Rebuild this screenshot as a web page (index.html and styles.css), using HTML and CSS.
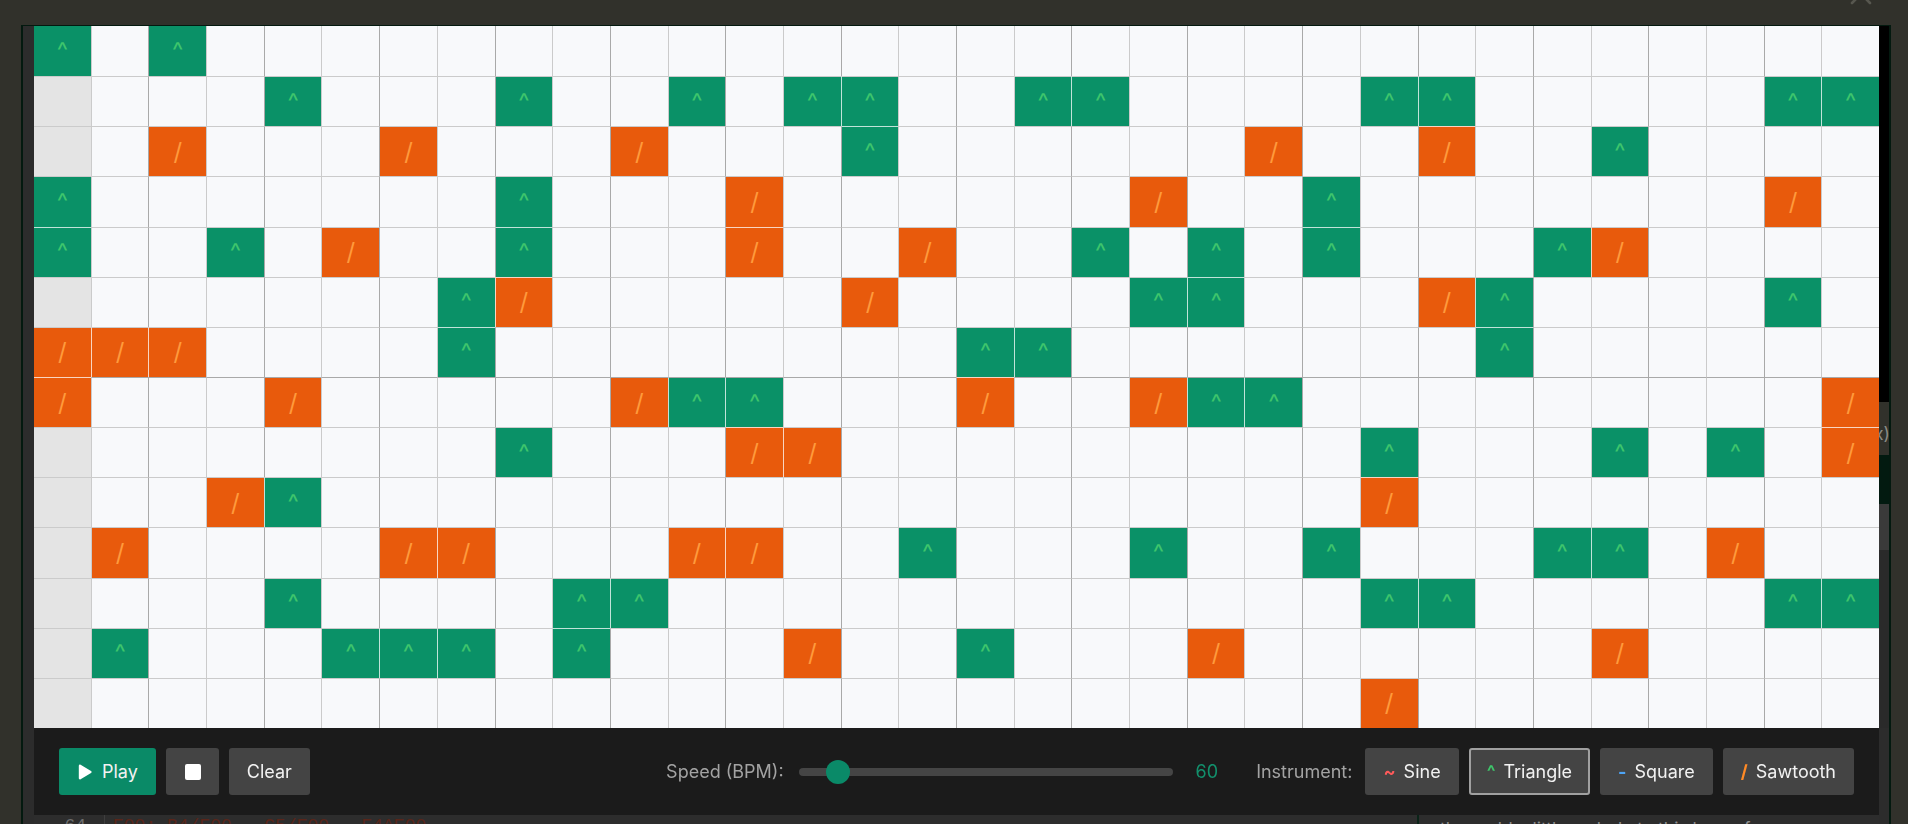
FILE: index.html
```html
<!DOCTYPE html>
<html lang="en">
<head>
<meta charset="utf-8">
<title>Step Sequencer</title>
<link rel="stylesheet" href="styles.css">
</head>
<body>
<div class="page">
  <header class="topbar">
    <button class="close" aria-label="Close">
      <svg width="22" height="22" viewBox="0 0 22 22"><path d="M2 2 L20 20 M20 2 L2 20" stroke="#57574f" stroke-width="2.6" stroke-linecap="round"/></svg>
    </button>
  </header>
  <div class="work">
    <div class="stage">
      <div class="stage-view"></div>
      <div class="editor">
        <div class="ln">64</div>
        <div class="code">E00: B4/E00 . C5/E00 . E4^E00</div>
        <div class="notes">then add a little melody to this loop of</div>
      </div>
    </div>
    <aside class="side">
      <div class="side-gap"></div>
      <div class="side-label"><span>(max)</span></div>
      <div class="side-green"></div>
      <div class="side-gray"></div>
      <div class="side-rest"></div>
    </aside>
  </div>
</div>

<div class="modal">
  <div class="m-left"></div>
  <div class="m-center">
    <div class="grid">
      <div class="row"><i class="t">^</i><i></i><i class="t">^</i><i></i><i></i><i></i><i></i><i></i><i></i><i></i><i></i><i></i><i></i><i></i><i></i><i></i><i></i><i></i><i></i><i></i><i></i><i></i><i></i><i></i><i></i><i></i><i></i><i></i><i></i><i></i><i></i><i></i></div>
      <div class="row"><i></i><i></i><i></i><i></i><i class="t">^</i><i></i><i></i><i></i><i class="t">^</i><i></i><i></i><i class="t">^</i><i></i><i class="t">^</i><i class="t">^</i><i></i><i></i><i class="t">^</i><i class="t">^</i><i></i><i></i><i></i><i></i><i class="t">^</i><i class="t">^</i><i></i><i></i><i></i><i></i><i></i><i class="t">^</i><i class="t">^</i></div>
      <div class="row"><i></i><i></i><i class="s">/</i><i></i><i></i><i></i><i class="s">/</i><i></i><i></i><i></i><i class="s">/</i><i></i><i></i><i></i><i class="t u">^</i><i></i><i></i><i></i><i></i><i></i><i></i><i class="s">/</i><i></i><i></i><i class="s u">/</i><i></i><i></i><i class="t">^</i><i></i><i></i><i></i><i></i></div>
      <div class="row"><i class="t">^</i><i></i><i></i><i></i><i></i><i></i><i></i><i></i><i class="t">^</i><i></i><i></i><i></i><i class="s">/</i><i></i><i></i><i></i><i></i><i></i><i></i><i class="s">/</i><i></i><i></i><i class="t">^</i><i></i><i></i><i></i><i></i><i></i><i></i><i></i><i class="s">/</i><i></i></div>
      <div class="row"><i class="t u">^</i><i></i><i></i><i class="t">^</i><i></i><i class="s">/</i><i></i><i></i><i class="t u">^</i><i></i><i></i><i></i><i class="s u">/</i><i></i><i></i><i class="s">/</i><i></i><i></i><i class="t">^</i><i></i><i class="t">^</i><i></i><i class="t u">^</i><i></i><i></i><i></i><i class="t">^</i><i class="s">/</i><i></i><i></i><i></i><i></i></div>
      <div class="row"><i></i><i></i><i></i><i></i><i></i><i></i><i></i><i class="t">^</i><i class="s u">/</i><i></i><i></i><i></i><i></i><i></i><i class="s">/</i><i></i><i></i><i></i><i></i><i class="t">^</i><i class="t u">^</i><i></i><i></i><i></i><i class="s">/</i><i class="t">^</i><i></i><i></i><i></i><i></i><i class="t">^</i><i></i></div>
      <div class="row"><i class="s">/</i><i class="s">/</i><i class="s">/</i><i></i><i></i><i></i><i></i><i class="t u">^</i><i></i><i></i><i></i><i></i><i></i><i></i><i></i><i></i><i class="t">^</i><i class="t">^</i><i></i><i></i><i></i><i></i><i></i><i></i><i></i><i class="t u">^</i><i></i><i></i><i></i><i></i><i></i><i></i></div>
      <div class="row mid"><i class="s u">/</i><i></i><i></i><i></i><i class="s">/</i><i></i><i></i><i></i><i></i><i></i><i class="s">/</i><i class="t">^</i><i class="t">^</i><i></i><i></i><i></i><i class="s u">/</i><i></i><i></i><i class="s">/</i><i class="t">^</i><i class="t">^</i><i></i><i></i><i></i><i></i><i></i><i></i><i></i><i></i><i></i><i class="s">/</i></div>
      <div class="row"><i></i><i></i><i></i><i></i><i></i><i></i><i></i><i></i><i class="t">^</i><i></i><i></i><i></i><i class="s u">/</i><i class="s">/</i><i></i><i></i><i></i><i></i><i></i><i></i><i></i><i></i><i></i><i class="t">^</i><i></i><i></i><i></i><i class="t">^</i><i></i><i class="t">^</i><i></i><i class="s u">/</i></div>
      <div class="row"><i></i><i></i><i></i><i class="s">/</i><i class="t">^</i><i></i><i></i><i></i><i></i><i></i><i></i><i></i><i></i><i></i><i></i><i></i><i></i><i></i><i></i><i></i><i></i><i></i><i></i><i class="s u">/</i><i></i><i></i><i></i><i></i><i></i><i></i><i></i><i></i></div>
      <div class="row"><i></i><i class="s">/</i><i></i><i></i><i></i><i></i><i class="s">/</i><i class="s">/</i><i></i><i></i><i></i><i class="s">/</i><i class="s">/</i><i></i><i></i><i class="t">^</i><i></i><i></i><i></i><i class="t">^</i><i></i><i></i><i class="t">^</i><i></i><i></i><i></i><i class="t">^</i><i class="t">^</i><i></i><i class="s">/</i><i></i><i></i></div>
      <div class="row"><i></i><i></i><i></i><i></i><i class="t">^</i><i></i><i></i><i></i><i></i><i class="t">^</i><i class="t">^</i><i></i><i></i><i></i><i></i><i></i><i></i><i></i><i></i><i></i><i></i><i></i><i></i><i class="t">^</i><i class="t">^</i><i></i><i></i><i></i><i></i><i></i><i class="t">^</i><i class="t">^</i></div>
      <div class="row"><i></i><i class="t">^</i><i></i><i></i><i></i><i class="t">^</i><i class="t">^</i><i class="t">^</i><i></i><i class="t u">^</i><i></i><i></i><i></i><i class="s">/</i><i></i><i></i><i class="t">^</i><i></i><i></i><i></i><i class="s">/</i><i></i><i></i><i></i><i></i><i></i><i></i><i class="s">/</i><i></i><i></i><i></i><i></i></div>
      <div class="row"><i></i><i></i><i></i><i></i><i></i><i></i><i></i><i></i><i></i><i></i><i></i><i></i><i></i><i></i><i></i><i></i><i></i><i></i><i></i><i></i><i></i><i></i><i></i><i class="s">/</i><i></i><i></i><i></i><i></i><i></i><i></i><i></i><i></i></div>
    </div>
    <div class="controls">
      <div class="transport">
        <button class="btn btn-play">
          <svg width="14" height="16" viewBox="0 0 14 16"><path d="M2 1.8 L12.4 8 L2 14.2 Z" fill="#fff" stroke="#fff" stroke-width="2.4" stroke-linejoin="round"/></svg>
          <span>Play</span>
        </button>
        <button class="btn btn-stop" aria-label="Stop">
          <svg width="16" height="16" viewBox="0 0 16 16"><rect x="0" y="0" width="16" height="16" rx="2" fill="#fff"/></svg>
        </button>
        <button class="btn">Clear</button>
      </div>
      <div class="settings">
        <label class="lbl" for="bpm">Speed (BPM):</label>
        <input id="bpm" class="range" type="range" min="40" max="300" value="60">
        <span class="bpm-val">60</span>
        <span class="lbl lbl-inst">Instrument:</span>
        <div class="inst-list">
          <button class="btn inst"><span class="wave wave-sine">~</span>Sine</button>
          <button class="btn inst active"><span class="wave wave-tri">^</span>Triangle</button>
          <button class="btn inst"><span class="wave wave-sq">-</span>Square</button>
          <button class="btn inst"><span class="wave wave-saw">/</span>Sawtooth</button>
        </div>
      </div>
    </div>
  </div>
  <div class="m-right">
    <div class="m-right-top"></div>
    <div class="m-right-mid"></div>
    <div class="m-right-bottom"></div>
  </div>
</div>
</body>
</html>
```
FILE: styles.css
```css
* { box-sizing: border-box; }
html, body { margin: 0; height: 100%; }
body {
  background: #31312b;
  font-family: Inter, "Noto Sans", "Liberation Sans", sans-serif;
  overflow: hidden;
}

/* ---------- underlying page ---------- */
.page { display: flex; flex-direction: column; height: 100vh; }
.topbar {
  height: 25px;
  flex: none;
  display: flex;
  justify-content: flex-end;
  padding-right: 36px;
}
.close {
  background: none;
  border: 0;
  padding: 0;
  width: 22px;
  height: 22px;
  margin-top: -17px;
}
.work { flex: 1; display: flex; min-height: 0; }
.stage {
  width: 1858px;
  margin-left: 21px;
  border-left: 2px solid #03190f;
  display: flex;
  flex-direction: column;
}
.stage-view { height: 790px; flex: none; background: #2c2c2c; }
.editor {
  flex: 1;
  display: flex;
  background: #2d2d2d;
  font-family: "Liberation Mono", monospace;
  font-size: 18px;
  line-height: 22px;
}
.ln {
  width: 82px;
  flex: none;
  text-align: right;
  padding-right: 18px;
  color: #6e6e6e;
  border-right: 1px solid #3e3e3e;
}
.code {
  width: 1312px;
  flex: none;
  padding-left: 8px;
  color: #5a2519;
}
.notes {
  flex: 1;
  border-left: 2px solid #0a2418;
  padding: 3px 0 0 21px;
  font-family: Inter, "Noto Sans", sans-serif;
  font-size: 17.5px;
  color: #8e8e8e;
  white-space: nowrap;
  overflow: hidden;
}
.side { width: 29px; flex: none; display: flex; flex-direction: column; }
.side-gap { height: 377px; flex: none; }
.side-label {
  height: 53px;
  flex: none;
  display: flex;
  justify-content: flex-end;
  padding: 22px 18px 0 0;
  font-size: 17.5px;
  line-height: 20px;
  color: #8c8c86;
  white-space: nowrap;
  overflow: hidden;
}
.side-green { height: 49px; width: 12px; flex: none; background: #021a10; }
.side-gray { height: 46px; width: 10px; flex: none; background: #3a3a3a; }
.side-rest { flex: 1; width: 12px; background: #2a2a2a; }

/* ---------- modal ---------- */
.modal {
  position: fixed;
  left: 21px;
  top: 25px;
  bottom: 0;
  width: 1870px;
  border: 2px solid #03190f;
  border-top-width: 1px;
  border-bottom: 0;
  display: flex;
}
.m-left { width: 11px; flex: none; background: #2c2c2c; }
.m-center { width: 1845px; flex: none; display: flex; flex-direction: column; }
.m-right { width: 10px; flex: none; display: flex; flex-direction: column; }
.m-right-top { height: 376px; flex: none; background: #000; }
.m-right-mid { height: 326px; flex: none; }
.m-right-bottom { flex: 1; background: #2c2c2c; }

/* ---------- grid ---------- */
.grid {
  height: 702px;
  flex: none;
  display: flex;
  flex-direction: column;
  background: #f8f9fb;
}
.row { flex: 1; display: flex; min-height: 0; }
.row > i {
  flex: 1;
  min-width: 0;
  display: flex;
  align-items: center;
  justify-content: center;
  font-style: normal;
  font-family: Inter, "Noto Sans", sans-serif;
  font-size: 24px;
  line-height: 1;
  background: #f8f9fb;
  border-left: 1px solid #cbcbcb;
  border-top: 1px solid #cbcbcb;
}
.row > i:nth-child(odd) { border-left-color: #a9a9a9; }
.row > i:first-child { border-left-width: 0; background: #e4e4e4; }
.row:first-child > i { border-top-width: 0; }
.row.mid > i { border-top-color: #a9a9a9; }
.row > i.t { background: #0a9167; color: #3ec56c; }
.row > i.s { background: #e85a0c; color: #ff9a3c; }
.row > .t + .t,
.row > .t + .s,
.row > .s + .t,
.row > .s + .s { border-left-color: rgba(255, 255, 255, 0.75); }
.row > i.u { border-top-color: rgba(255, 255, 255, 0.75); }

/* ---------- controls ---------- */
.controls {
  height: 87px;
  flex: none;
  background: #1b1b1b;
  display: flex;
  align-items: center;
  padding: 0 25px;
  font-size: 18px;
}
.transport { display: flex; gap: 10px; }
.btn {
  height: 47px;
  border: 0;
  border-radius: 3px;
  padding: 0 18px;
  font: inherit;
  font-family: Inter, "Noto Sans", sans-serif;
  font-size: 18px;
  color: #f2f2f2;
  background: #444444;
  display: flex;
  align-items: center;
  white-space: nowrap;
}
.btn-play { background: #0a8a67; gap: 10px; padding-left: 19px; }
.btn-stop { padding: 0 18px 0 19px; }
.settings { margin-left: auto; display: flex; align-items: center; }
.lbl { color: #a3a3a3; }
.range {
  -webkit-appearance: none;
  appearance: none;
  width: 374px;
  height: 8px;
  margin: 0 23px 0 15px;
  background: #454545;
  border-radius: 4px;
  outline: none;
}
.range::-webkit-slider-thumb {
  -webkit-appearance: none;
  appearance: none;
  width: 24px;
  height: 24px;
  border-radius: 50%;
  border: 0;
  background: #0a8a68;
}
.bpm-val { color: #12906c; }
.lbl-inst { margin-left: 38px; margin-right: 13px; }
.inst-list { display: flex; gap: 10px; }
.inst.active { border: 2px solid #a0a0a0; padding: 0 16px; }
.wave { font-weight: 700; margin-right: 8px; }
.wave-sine { color: #ff5a5a; }
.wave-tri { color: #3fc46a; }
.wave-sq { color: #4ea4f5; }
.wave-saw { color: #ff8a26; }
```
